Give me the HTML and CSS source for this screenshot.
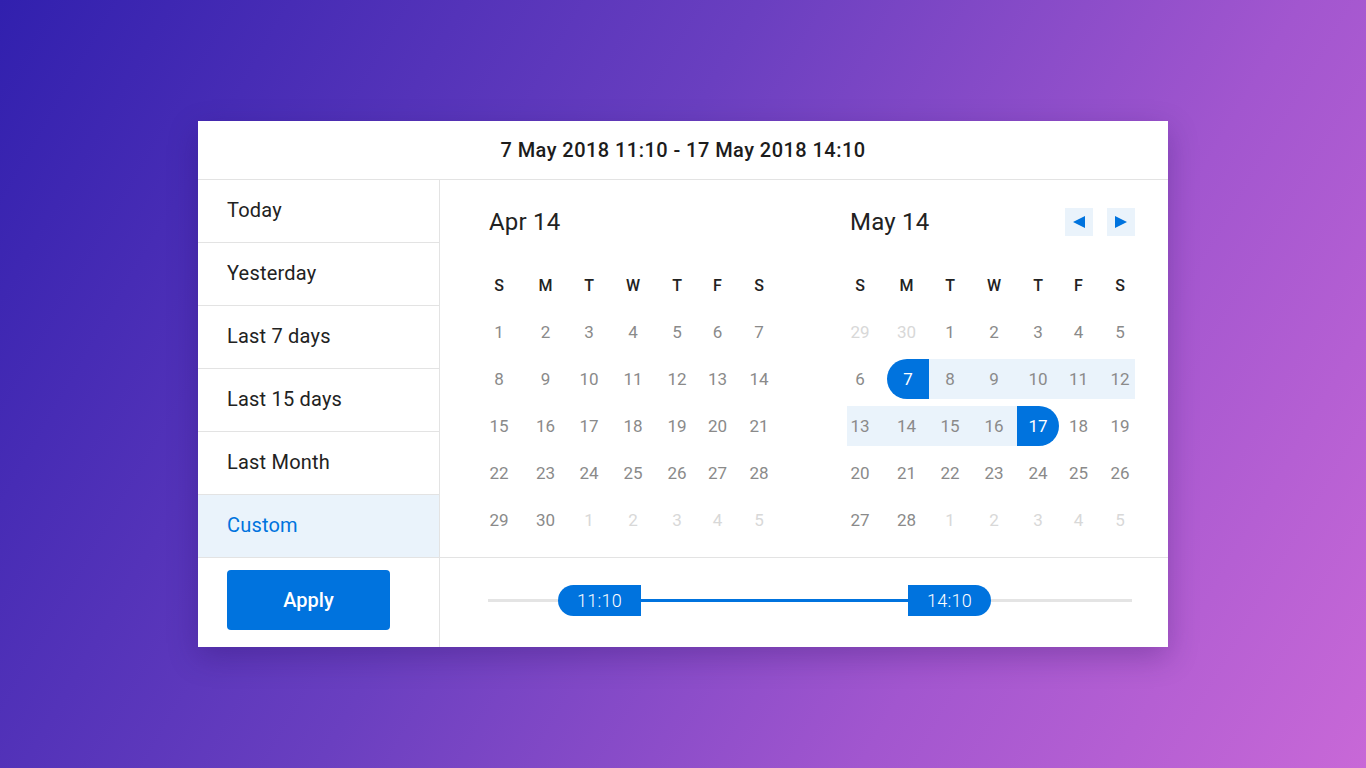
FILE: index.html
```html
<!DOCTYPE html>
<html lang="en">
<head>
<meta charset="utf-8">
<title>Date range picker</title>
<link rel="stylesheet" href="styles.css">
</head>
<body>
<div class="picker">
  <div class="picker-head">7 May 2018 11:10 - 17 May 2018 14:10</div>
  <div class="picker-body">
    <ul class="presets">
      <li class="preset">Today</li>
      <li class="preset">Yesterday</li>
      <li class="preset">Last 7 days</li>
      <li class="preset">Last 15 days</li>
      <li class="preset">Last Month</li>
      <li class="preset active">Custom</li>
    </ul>
    <div class="calendars">
      <div class="month">
        <div class="month-head"><span class="month-title">Apr 14</span></div>
        <div class="grid">
          <span class="wd">S</span><span class="wd">M</span><span class="wd">T</span><span class="wd">W</span><span class="wd">T</span><span class="wd">F</span><span class="wd">S</span>
          <span class="d">1</span><span class="d">2</span><span class="d">3</span><span class="d">4</span><span class="d">5</span><span class="d">6</span><span class="d">7</span>
          <span class="d">8</span><span class="d">9</span><span class="d">10</span><span class="d">11</span><span class="d">12</span><span class="d">13</span><span class="d">14</span>
          <span class="d">15</span><span class="d">16</span><span class="d">17</span><span class="d">18</span><span class="d">19</span><span class="d">20</span><span class="d">21</span>
          <span class="d">22</span><span class="d">23</span><span class="d">24</span><span class="d">25</span><span class="d">26</span><span class="d">27</span><span class="d">28</span>
          <span class="d">29</span><span class="d">30</span><span class="d muted">1</span><span class="d muted">2</span><span class="d muted">3</span><span class="d muted">4</span><span class="d muted">5</span>
        </div>
      </div>
      <div class="month">
        <div class="month-head">
          <span class="month-title">May 14</span>
          <div class="nav">
            <button class="nav-btn" aria-label="Previous month"><svg width="12" height="12" viewBox="0 0 12 12"><path d="M0 6 L12 0 L12 12 Z" fill="#0073de"/></svg></button>
            <button class="nav-btn" aria-label="Next month"><svg width="12" height="12" viewBox="0 0 12 12"><path d="M12 6 L0 0 L0 12 Z" fill="#0073de"/></svg></button>
          </div>
        </div>
        <div class="grid">
          <span class="wd">S</span><span class="wd">M</span><span class="wd">T</span><span class="wd">W</span><span class="wd">T</span><span class="wd">F</span><span class="wd">S</span>
          <span class="d muted">29</span><span class="d muted">30</span><span class="d">1</span><span class="d">2</span><span class="d">3</span><span class="d">4</span><span class="d">5</span>
          <span class="d">6</span><span class="d start">7</span><span class="d in">8</span><span class="d in">9</span><span class="d in">10</span><span class="d in">11</span><span class="d in">12</span>
          <span class="d in">13</span><span class="d in">14</span><span class="d in">15</span><span class="d in">16</span><span class="d end">17</span><span class="d">18</span><span class="d">19</span>
          <span class="d">20</span><span class="d">21</span><span class="d">22</span><span class="d">23</span><span class="d">24</span><span class="d">25</span><span class="d">26</span>
          <span class="d">27</span><span class="d">28</span><span class="d muted">1</span><span class="d muted">2</span><span class="d muted">3</span><span class="d muted">4</span><span class="d muted">5</span>
        </div>
      </div>
    </div>
    <div class="actions">
      <button class="apply">Apply</button>
    </div>
    <div class="time">
      <div class="slider">
        <div class="track"></div>
        <div class="track-active"></div>
        <div class="handle handle-start">11:10</div>
        <div class="handle handle-end">14:10</div>
      </div>
    </div>
  </div>
</div>
</body>
</html>
```
FILE: styles.css
```css
* { box-sizing: border-box; }

html, body { margin: 0; padding: 0; }

body {
  width: 1366px;
  height: 768px;
  display: flex;
  align-items: center;
  justify-content: center;
  font-family: Roboto, "Liberation Sans", sans-serif;
  background: linear-gradient(120deg, #3120ae 0%, #6a3fc0 42%, #a256cf 72%, #c868d7 100%);
  overflow: hidden;
}

.picker {
  width: 970px;
  height: 526px;
  background: #fff;
  box-shadow: 0 10px 28px rgba(35, 10, 90, 0.28);
  display: flex;
  flex-direction: column;
}

.picker-head {
  height: 59px;
  border-bottom: 1px solid #e3e3e3;
  display: flex;
  align-items: center;
  justify-content: center;
  font-size: 20px;
  font-weight: 500;
  color: #1c1c1c;
  letter-spacing: 0.45px;
}

.picker-body {
  flex: 1;
  display: grid;
  grid-template-columns: 242px 1fr;
  grid-template-rows: 378px 1fr;
}

.presets {
  list-style: none;
  margin: 0;
  padding: 0;
  border-right: 1px solid #e3e3e3;
}

.preset {
  height: 63px;
  border-bottom: 1px solid #e3e3e3;
  display: flex;
  align-items: center;
  padding-left: 29px;
  padding-bottom: 2px;
  font-size: 20px;
  color: #222;
  letter-spacing: 0.2px;
}

.preset.active {
  background: #eaf3fb;
  color: #0073de;
}

.calendars {
  display: flex;
  gap: 73px;
  padding: 28px 0 0 46px;
  border-bottom: 1px solid #e3e3e3;
}

.month { width: 288px; }

.month-head {
  height: 28px;
  display: flex;
  align-items: center;
  justify-content: space-between;
}

.month-title {
  font-size: 24px;
  color: #222;
  padding-left: 3px;
  letter-spacing: 0.2px;
}

.nav { display: flex; gap: 14px; }

.nav-btn {
  width: 28px;
  height: 28px;
  border: 0;
  padding: 0;
  background: #eaf3fb;
  display: flex;
  align-items: center;
  justify-content: center;
}

.grid {
  display: grid;
  grid-template-columns: 40px 42px 42px 46px 42px 39px 37px;
  grid-auto-rows: 40px;
  row-gap: 7px;
  margin-top: 29px;
}

.wd, .d {
  display: flex;
  align-items: center;
  justify-content: center;
}

.grid > :nth-child(7n+1) { padding-right: 14px; }
.grid > :nth-child(7n) { padding-left: 7px; }
.grid > :nth-child(7n+2) { padding-right: 3px; }

.wd {
  font-size: 16px;
  font-weight: 500;
  color: #222;
}

.d {
  font-size: 17px;
  color: #8a8a8a;
}

.d.muted { color: #d8d8d8; }

.d.in { background: #eaf3fb; }

.d.start, .d.end {
  background: #0073de;
  color: #fff;
}

.grid > .d.start { padding-right: 0; }

.d.start { border-radius: 20px 0 0 20px; }
.d.end { border-radius: 0 20px 20px 0; }

.actions {
  border-right: 1px solid #e3e3e3;
  padding: 12px 0 0 29px;
}

.apply {
  width: 163px;
  height: 60px;
  border: 0;
  border-radius: 4px;
  background: #0073de;
  color: #fff;
  font-family: inherit;
  font-size: 20px;
  font-weight: 500;
}

.time {
  display: flex;
  align-items: center;
  padding-left: 48px;
  padding-bottom: 5px;
}

.slider {
  position: relative;
  width: 644px;
  height: 31px;
}

.track {
  position: absolute;
  left: 0;
  right: 0;
  top: 14px;
  height: 3px;
  background: #e4e4e4;
}

.track-active {
  position: absolute;
  left: 150px;
  width: 280px;
  top: 14px;
  height: 3px;
  background: #0073de;
}

.handle {
  position: absolute;
  top: 0;
  width: 83px;
  height: 31px;
  background: #0073de;
  color: #fff;
  font-size: 18px;
  font-weight: 300;
  letter-spacing: 0.3px;
  display: flex;
  align-items: center;
  justify-content: center;
}

.handle-start {
  left: 70px;
  border-radius: 16px 0 0 16px;
}

.handle-end {
  left: 420px;
  border-radius: 0 16px 16px 0;
}
```
